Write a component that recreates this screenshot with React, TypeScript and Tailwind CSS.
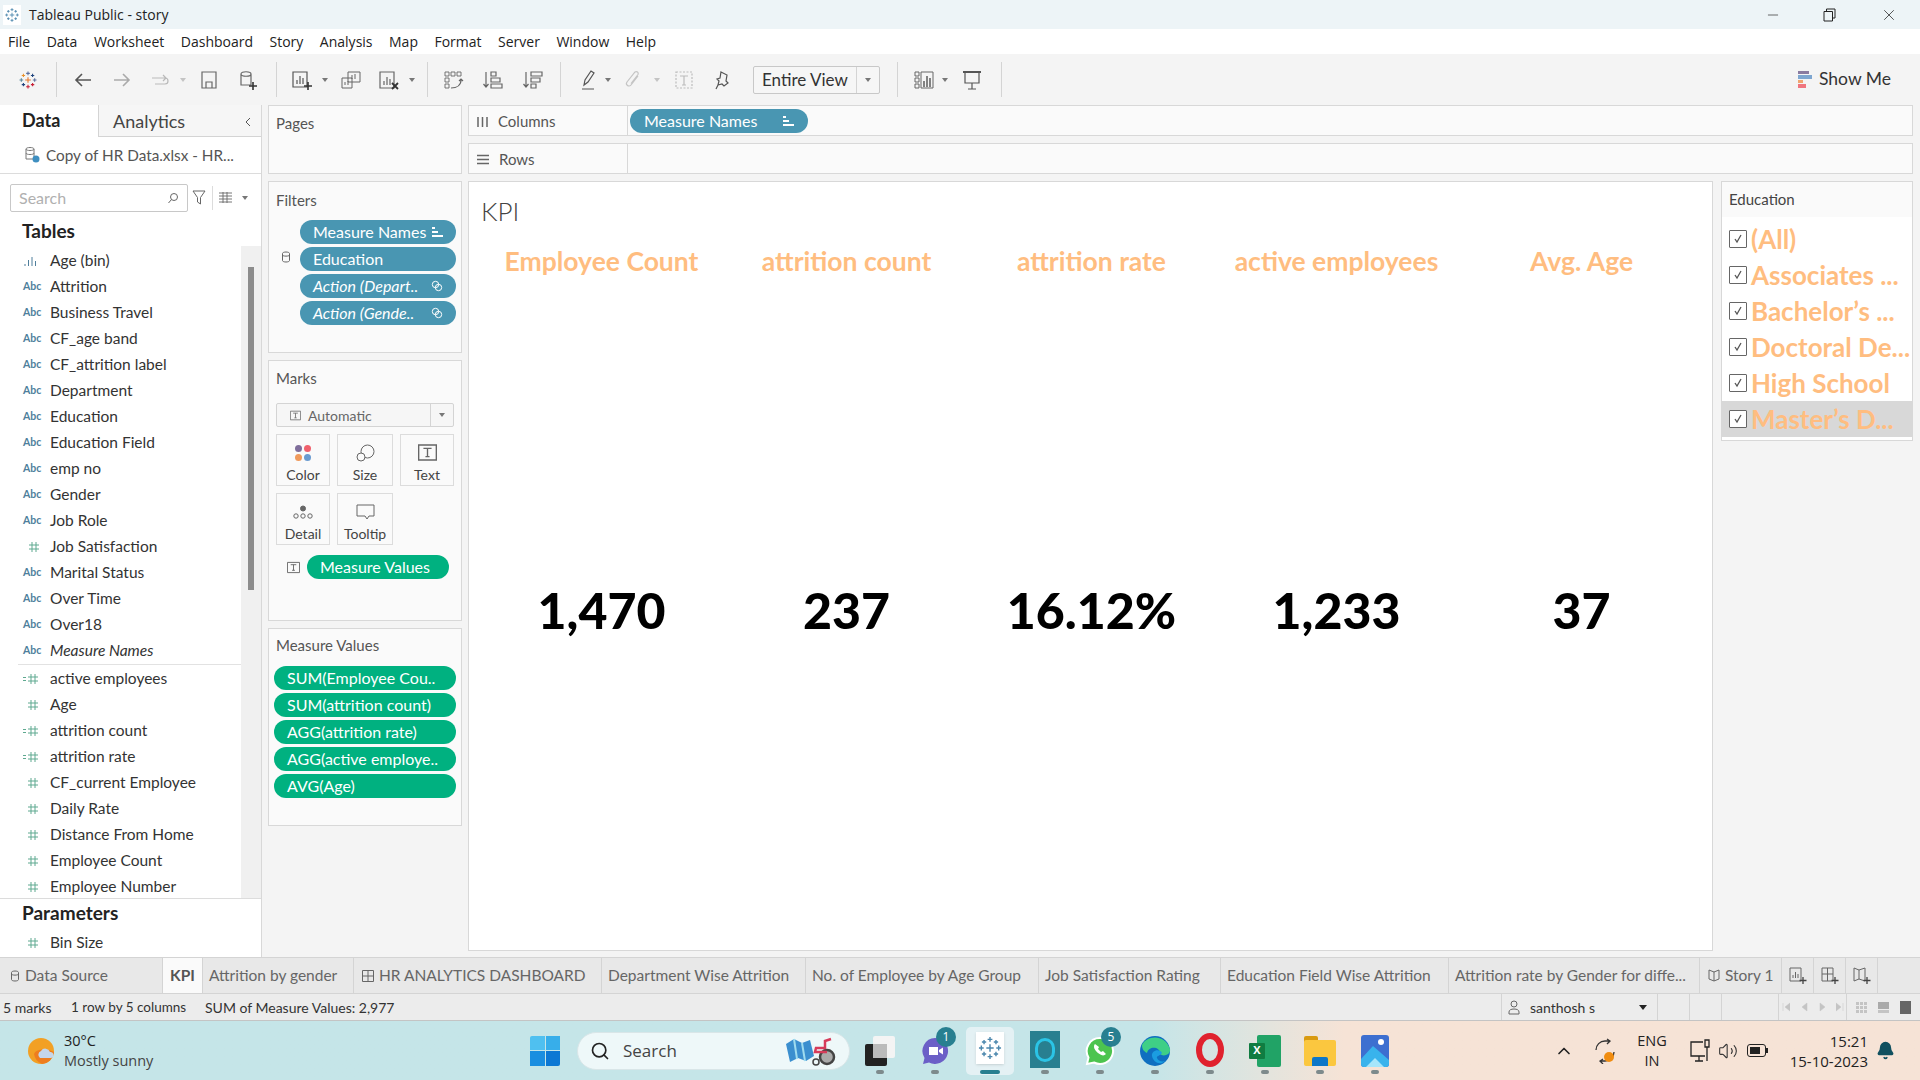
import type { ReactNode } from "react";
import { Search, ChevronUp, Bell, Volume2, X, Minus } from "lucide-react";

const dims = ["Attrition", "Business Travel", "CF_age band", "CF_attrition label", "Department", "Education", "Education Field", "emp no", "Gender", "Job Role"];
const dims2 = ["Marital Status", "Over Time", "Over18"];
const measures: [string, boolean][] = [
  ["active employees", true],
  ["Age", false],
  ["attrition count", true],
  ["attrition rate", true],
  ["CF_current Employee", false],
  ["Daily Rate", false],
  ["Distance From Home", false],
  ["Employee Count", false],
  ["Employee Number", false],
];
const kpis = [
  ["Employee Count", "1,470"],
  ["attrition count", "237"],
  ["attrition rate", "16.12%"],
  ["active employees", "1,233"],
  ["Avg. Age", "37"],
];
const education = ["(All)", "Associates ...", "Bachelor’s ...", "Doctoral De...", "High School", "Master’s D..."];
const menus = ["File", "Data", "Worksheet", "Dashboard", "Story", "Analysis", "Map", "Format", "Server", "Window", "Help"];
const tabs: [string, number][] = [
  ["Attrition by gender", 151],
  ["HR ANALYTICS DASHBOARD", 248],
  ["Department Wise Attrition", 204],
  ["No. of Employee by Age Group", 233],
  ["Job Satisfaction Rating", 182],
  ["Education Field Wise Attrition", 228],
  ["Attrition rate by Gender for diffe...", 251],
];

function Ico({ w = 22, h = 22, vb = "0 0 22 22", children }: { w?: number; h?: number; vb?: string; children: ReactNode }) {
  return (
    <svg width={w} height={h} viewBox={vb} fill="none" stroke="currentColor" strokeWidth="1.2">
      {children}
    </svg>
  );
}

function Caret({ light }: { light?: boolean }) {
  return <div className={`w-0 h-0 border-x-[3.5px] border-x-transparent border-t-[4px] ${light ? "border-t-[#c4c4c4]" : "border-t-[#777]"}`} />;
}

function Box({ ml, w = 26, children }: { ml: string; w?: number; children: ReactNode }) {
  return (
    <div className={`${ml} flex justify-center items-center text-[#666]`} style={{ width: w }}>
      {children}
    </div>
  );
}

function Sep({ ml }: { ml: string }) {
  return <div className={`${ml} w-px h-[35px] bg-[#d4d4d4]`} />;
}

function Crosses({ colored }: { colored?: boolean }) {
  const c = (k: string) => (colored ? k : "#4b87ad");
  const items: [number, number, number, string][] = [
    [12, 12, 3.4, c("#e8762b")],
    [12, 4, 2.2, c("#5b6f9e")],
    [12, 20, 2.2, c("#c72037")],
    [4, 12, 2.2, c("#59879b")],
    [20, 12, 2.2, c("#5b6f9e")],
    [6.5, 6.5, 2, c("#eb9129")],
    [17.5, 6.5, 2, c("#1f447e")],
    [6.5, 17.5, 2, c("#1f447e")],
    [17.5, 17.5, 2, c("#c72037")],
  ];
  return (
    <>
      {items.map(([x, y, r, col], i) => (
        <path key={i} d={`M${x - r} ${y}H${x + r}M${x} ${y - r}V${y + r}`} stroke={col} strokeWidth="1.3" />
      ))}
    </>
  );
}

function Toolbar() {
  return (
    <div className="h-[51px] bg-[#f4f4f4] flex items-center shrink-0">
      <div className="w-[56px] flex justify-center">
        <Ico w={20} h={20} vb="0 0 24 24"><Crosses colored /></Ico>
      </div>
      <Sep ml="" />
      <Box ml="ml-[13px]"><Ico><path d="M19 11H4M10 5l-6 6 6 6" stroke="#555" strokeWidth="1.6" /></Ico></Box>
      <Box ml="ml-[13px]"><Ico><path d="M3 11h15M12 5l6 6-6 6" stroke="#aaa" strokeWidth="1.6" /></Ico></Box>
      <Box ml="ml-[13px]" w={24}><Ico><path d="M6 15h10a3 3 0 0 0 0-6H3M14 6l3 3-3 3" stroke="#b9b9b9" /></Ico></Box>
      <Box ml="ml-[6px]" w={10}><Caret light /></Box>
      <Box ml="ml-[8px]"><Ico><path d="M4 3h14v16H4zM8 19v-6h6v6" stroke="#666" /></Ico></Box>
      <Box ml="ml-[13px]"><Ico><path d="M4 5c0-3 10-3 10 0v11H4zM4 5c0 3 10 3 10 0" stroke="#666" /><path d="M16 13v8M12 17h8" stroke="#333" strokeWidth="1.6" /></Ico></Box>
      <Sep ml="ml-[15px]" />
      <Box ml="ml-[11px]"><Ico><path d="M3 3h14v15H3zM7 15v-4M10 15V7M13 15v-6" stroke="#555" /><path d="M18 13v8M14 17h8" stroke="#333" strokeWidth="1.6" /></Ico></Box>
      <Box ml="ml-[6px]" w={10}><Caret /></Box>
      <Box ml="ml-[8px]"><Ico><path d="M8 3h12v10H8zM2 9h10v10H2zM12 10V6M15 10V5M5 16v-3M8 16v-4" stroke="#666" strokeWidth="1" /></Ico></Box>
      <Box ml="ml-[11px]"><Ico><path d="M3 3h14v16H3zM7 16v-4M10 16V8M13 16v-6" stroke="#666" /><path d="M15 14l6 6M21 14l-6 6" stroke="#333" strokeWidth="1.8" /></Ico></Box>
      <Box ml="ml-[6px]" w={10}><Caret /></Box>
      <Sep ml="ml-[10px]" />
      <Box ml="ml-[12px]"><Ico><path d="M3 3h4v4H3zM9 3h4v4H9zM15 3h4v4h-4zM3 9h4v4H3zM3 15h4v4H3z" strokeWidth="0.9" /><path d="M9 19c6 0 10-3 10-8M17 12l2-2 2 2" /></Ico></Box>
      <Box ml="ml-[14px]"><Ico><path d="M4 3v15M1.500 15L4 18l2.500-3M9 3h5v4H9zM9 9h9v4H9zM9 15h11v4H9z" /></Ico></Box>
      <Box ml="ml-[14px]"><Ico><path d="M4 3v15M1.500 15L4 18l2.500-3M9 3h11v4H9zM9 9h9v4H9zM9 15h5v4H9z" /></Ico></Box>
      <Sep ml="ml-[14px]" />
      <Box ml="ml-[13px]"><Ico><path d="M8 16l1-5 6-9 3 2-6 9zM6 20h12" stroke="#555" /></Ico></Box>
      <Box ml="ml-[3px]" w={10}><Caret /></Box>
      <Box ml="ml-[7px]"><Ico><path d="M16 7l-7 9a2.500 2.500 0 0 1-4-3l8-10a2 2 0 0 1 3 2.500l-7 9" stroke="#c4c4c4" /></Ico></Box>
      <Box ml="ml-[6px]" w={10}><Caret light /></Box>
      <Box ml="ml-[9px]"><Ico><path d="M3 3h16v16H3z" stroke="#bbb" strokeDasharray="2 1.500" /><path d="M7 7h8M11 7v9M9 16h4" stroke="#bbb" /></Ico></Box>
      <Box ml="ml-[12px]"><Ico><path d="M10 3l6 3-1 6 2 2-4 3-2-2-4 1 1-4-2-2 3-1zM7 16l-2 4" stroke="#555" /></Ico></Box>
      <div className="ml-[18px] w-[127px] h-[28px] flex border border-[#c8c8c8] rounded-[2px] bg-[#f6f6f6]">
        <div className="w-[103px] border-r border-[#d4d4d4] pl-[8px] text-[17px] leading-[26px] text-[#333]">Entire View</div>
        <div className="flex-1 flex items-center justify-center"><Caret /></div>
      </div>
      <Sep ml="ml-[17px]" />
      <Box ml="ml-[13px]"><Ico><path d="M2 3h4v4H2zM2 9h4v4H2zM2 15h4v4H2zM8 3h12v16H8z" stroke="#666" strokeWidth="1" /><path d="M11 18v-6M14 18V7M17 18v-9" stroke="#666" strokeWidth="1.6" /></Ico></Box>
      <Box ml="ml-[3px]" w={10}><Caret /></Box>
      <Box ml="ml-[9px]"><Ico><path d="M2 3h18" stroke="#555" strokeWidth="2" /><path d="M4 3v11h14V3M11 14v6M7 20h8" stroke="#555" /></Ico></Box>
      <Sep ml="ml-[16px]" />
      <div className="ml-auto mr-[29px] flex items-center gap-[7px] text-[17.5px] text-[#333]">
        <div className="flex flex-col w-[14px] h-[18px] gap-[1px]">
          <div className="h-[3.5px] w-[11px] bg-[#8a7ba0]" />
          <div className="h-[3.5px] w-[14px] bg-[#7ea6d0]" />
          <div className="h-[3.5px] w-[5px] bg-[#f0a56f]" />
          <div className="h-[3.5px] w-[8px] bg-[#f0767f]" />
        </div>
        Show Me
      </div>
    </div>
  );
}

function Hash({ calc }: { calc?: boolean }) {
  return (
    <svg width="18" height="12" viewBox="0 0 18 12" fill="none" stroke="#5fa990" strokeWidth="1">
      {calc && <path d="M0 4.500h3M0 7.500h3" />}
      <path d="M5 4h10M5 8h10M8 1v10M12 1v10" />
    </svg>
  );
}

function Field({ icon, label, italic }: { icon: ReactNode; label: string; italic?: boolean }) {
  return (
    <div className="h-[26px] flex items-center">
      <div className="w-[50px] pl-[23px] flex items-center shrink-0">{icon}</div>
      <span className={`text-[15.5px] text-[#333] ${italic ? "italic" : ""}`}>{label}</span>
    </div>
  );
}

function Abc() {
  return <span className="text-[10.5px] font-bold text-[#4f7f9c]">Abc</span>;
}

function DataPane() {
  return (
    <div className="w-[262px] shrink-0 bg-white border-r border-[#d8d8d8] flex flex-col">
      <div className="h-[32px] flex shrink-0">
        <div className="w-[98px] pl-[22px] text-[18px] font-bold leading-[31px] text-[#222]">Data</div>
        <div className="flex-1 bg-[#f6f6f6] border-l border-b border-[#d4d4d4] pt-[2px] pl-[14px] pr-[9px] flex items-center justify-between text-[18px] text-[#444]">
          Analytics
          <svg width="8" height="12" viewBox="0 0 8 12" fill="none" stroke="#555"><path d="M6 2L2 6l4 4" /></svg>
        </div>
      </div>
      <div className="h-[37px] border-b border-[#dcdcdc] flex items-center pl-[24px] gap-[6px] text-[15.3px] text-[#555] shrink-0">
        <svg width="16" height="18" viewBox="0 0 16 18" fill="none" stroke="#777"><path d="M2 3c0-2 8-2 8 0v10H2zM2 3c0 2 8 2 8 0M2 7c0 2 8 2 8 0" /><circle cx="12" cy="13" r="3.500" fill="#3f8fc0" stroke="none" /></svg>
        Copy of HR Data.xlsx - HR...
      </div>
      <div className="h-[42px] pt-[5px] flex items-center pl-[10px] shrink-0">
        <div className="w-[178px] h-[28px] border border-[#c8c8c8] rounded-[2px] flex items-center justify-between pl-[8px] pr-[8px] text-[16px] text-[#b0b0b0]">
          Search
          <svg width="12" height="12" viewBox="0 0 12 12" fill="none" stroke="#666"><circle cx="7" cy="5" r="3.500" /><path d="M4.500 7.500L1.500 11" /></svg>
        </div>
        <svg className="ml-[4px]" width="14" height="15" viewBox="0 0 14 15" fill="none" stroke="#666"><path d="M1 1h12L8.500 7.500V14L5.500 12V7.500z" /></svg>
        <div className="ml-[6px] h-[24px] w-px bg-[#dcdcdc]" />
        <svg className="ml-[6px]" width="13" height="11" viewBox="0 0 13 11" fill="none" stroke="#666" strokeWidth="0.9"><path d="M0 1h13M0 4h13M0 7h13M0 10h13M4 0v11M8 0v11" /></svg>
        <div className="ml-[10px]"><Caret /></div>
      </div>
      <div className="h-[30px] pl-[22px] text-[19px] font-bold leading-[30px] text-[#222] shrink-0">Tables</div>
      <div className="h-[652px] shrink-0 flex">
        <div className="w-[241px] mt-[2px]">
          <Field label="Age (bin)" icon={<svg width="16" height="12" viewBox="0 0 16 12" fill="none" stroke="#4f7f9c"><path d="M2 11V9M5.500 11V5M9 11V2M12.500 11V6" /></svg>} />
          {dims.map((d) => <Field key={d} label={d} icon={<Abc />} />)}
          <Field label="Job Satisfaction" icon={<div className="pl-[1px]"><Hash /></div>} />
          {dims2.map((d) => <Field key={d} label={d} icon={<Abc />} />)}
          <div className="ml-[18px] mb-[1px] border-b border-[#e2e2e2]">
            <div className="-ml-[18px]"><Field label="Measure Names" italic icon={<Abc />} /></div>
          </div>
          {measures.map(([m, calc]) => <Field key={m} label={m} icon={<Hash calc={calc} />} />)}
        </div>
        <div className="w-[20px] bg-[#f0f0f0] flex justify-center">
          <div className="w-[6px] h-[323px] mt-[21px] bg-[#8c8c8c]" />
        </div>
      </div>
      <div className="border-t border-[#dcdcdc] flex-1">
        <div className="h-[31px] pl-[22px] text-[19px] font-bold leading-[28px] text-[#222]">Parameters</div>
        <Field label="Bin Size" icon={<Hash />} />
      </div>
    </div>
  );
}

function Pill({ green, italic, className, children }: { green?: boolean; italic?: boolean; className?: string; children: ReactNode }) {
  return (
    <div className={`rounded-full h-[24px] flex items-center justify-between text-[16px] text-white ${green ? "bg-[#00b180]" : "bg-[#4996b2]"} ${italic ? "italic" : ""} ${className ?? ""}`}>
      {children}
    </div>
  );
}

function SortMark() {
  return (
    <svg width="11" height="10" viewBox="0 0 11 10" stroke="#fff" strokeWidth="1.800"><path d="M0 1h3M0 5h6M0 9h11" /></svg>
  );
}

function LinkMark() {
  return (
    <svg width="12" height="12" viewBox="0 0 12 12" fill="none" stroke="#fff"><circle cx="4.500" cy="4.500" r="3.200" /><circle cx="7.500" cy="7.500" r="3.200" /></svg>
  );
}

function TIcon({ size = 13 }: { size?: number }) {
  return (
    <svg width={size} height={size} viewBox="0 0 14 12" fill="none" stroke="#666"><path d="M.5.500h13v11H.500z" /><path d="M4 3h6M7 3v6M5.500 9h3" /></svg>
  );
}

function MarkCard({ label, wide, children }: { label: string; wide?: boolean; children: ReactNode }) {
  return (
    <div className={`${wide ? "w-[56px]" : "w-[54px]"} h-[52px] border border-[#dcdcdc] flex flex-col items-center text-[14px] text-[#444]`}>
      <div className="h-[29px] flex items-end justify-center">{children}</div>
      <div className="mt-[2px]">{label}</div>
    </div>
  );
}

function Shelves() {
  return (
    <div className="w-[194px] shrink-0 ml-[6px] flex flex-col gap-[7px] text-[15px] text-[#555]">
      <div className="h-[69px] bg-[#fafafa] border border-[#d8d8d8] pl-[7px] pt-[6px]">Pages</div>
      <div className="h-[172px] bg-[#fafafa] border border-[#d8d8d8] pl-[7px] pt-[7px]">
        <div className="leading-[22px]">Filters</div>
        <div className="mt-[9px] flex flex-col gap-[3px] relative">
          <Pill className="ml-[24px] w-[156px] pl-[13px] pr-[13px]">Measure Names <SortMark /></Pill>
          <Pill className="ml-[24px] w-[156px] pl-[13px]">Education</Pill>
          <Pill italic className="ml-[24px] w-[156px] pl-[13px] pr-[13px]">Action (Depart.. <LinkMark /></Pill>
          <Pill italic className="ml-[24px] w-[156px] pl-[13px] pr-[13px]">Action (Gende.. <LinkMark /></Pill>
          <svg className="absolute left-[6px] top-[31px]" width="8" height="12" viewBox="0 0 8 12" fill="none" stroke="#666"><path d="M.5 2.500c0-2 7-2 7 0v7c0 2-7 2-7 0zM.5 4c0 1.500 7 1.500 7 0" /></svg>
        </div>
      </div>
      <div className="h-[261px] bg-[#fafafa] border border-[#d8d8d8] pl-[7px] pt-[6px]">
        <div className="leading-[22px]">Marks</div>
        <div className="mt-[14px] w-[178px] h-[24px] border border-[#d4d4d4] rounded-[2px] flex bg-[#f6f6f6] text-[14px] text-[#666]">
          <div className="flex-1 flex items-center gap-[7px] pl-[13px] border-r border-[#d4d4d4]"><TIcon size={11} /> Automatic</div>
          <div className="w-[22px] flex items-center justify-center"><Caret /></div>
        </div>
        <div className="mt-[7px] flex gap-[7px]">
          <MarkCard label="Color">
            <div className="grid grid-cols-2 gap-[2px] w-[16px] mb-[1px]">
              <div className="h-[7px] rounded-full bg-[#7f6e9b]" /><div className="h-[7px] rounded-full bg-[#f0616d]" />
              <div className="h-[7px] rounded-full bg-[#f09a5c]" /><div className="h-[7px] rounded-full bg-[#6a9bd0]" />
            </div>
          </MarkCard>
          <MarkCard label="Size" wide>
            <svg width="19" height="18" viewBox="0 0 19 18" fill="none" stroke="#666"><circle cx="11.500" cy="7.500" r="6.500" /><circle cx="5" cy="13" r="4" fill="#fafafa" /></svg>
          </MarkCard>
          <MarkCard label="Text"><TIcon size={19} /></MarkCard>
        </div>
        <div className="mt-[7px] flex gap-[7px]">
          <MarkCard label="Detail">
            <svg width="20" height="16" viewBox="0 0 20 16" fill="none" stroke="#666"><circle cx="10" cy="3.500" r="2.500" fill="#666" /><circle cx="3" cy="11" r="2.200" /><circle cx="10" cy="11" r="2.200" /><circle cx="17" cy="11" r="2.200" /></svg>
          </MarkCard>
          <MarkCard label="Tooltip" wide>
            <svg width="19" height="17" viewBox="0 0 19 17" fill="none" stroke="#666"><path d="M1 1h17v11h-5l-2 3-2-3H1z" /></svg>
          </MarkCard>
        </div>
        <div className="mt-[10px] flex items-center">
          <div className="ml-[11px] w-[20px]"><TIcon /></div>
          <Pill green className="w-[142px] pl-[13px]">Measure Values</Pill>
        </div>
      </div>
      <div className="h-[198px] bg-[#fafafa] border border-[#d8d8d8] pl-[5px] pt-[5px]">
        <div className="pl-[2px] leading-[22px]">Measure Values</div>
        <div className="mt-[10px] flex flex-col gap-[3px]">
          {["SUM(Employee Cou..", "SUM(attrition count)", "AGG(attrition rate)", "AGG(active employe..", "AVG(Age)"].map((p) => (
            <Pill key={p} green className="w-[182px] pl-[13px]">{p}</Pill>
          ))}
        </div>
      </div>
    </div>
  );
}

function View() {
  return (
    <div className="flex-1 flex flex-col gap-[7px] ml-[6px] mr-[7px] min-w-0">
      <div className="h-[31px] bg-[#fafafa] border border-[#d8d8d8] flex items-center text-[15px] text-[#555]">
        <div className="w-[159px] h-full flex items-center gap-[10px] pl-[8px] pt-[1px] border-r border-[#d8d8d8]">
          <svg width="11" height="12" viewBox="0 0 11 12" stroke="#666" strokeWidth="1.500"><path d="M1 2v10M5.500 2v10M10 2v10" /></svg>
          Columns
        </div>
        <Pill className="ml-[2px] w-[178px] pl-[14px] pr-[14px]">Measure Names <SortMark /></Pill>
      </div>
      <div className="h-[31px] bg-[#fafafa] border border-[#d8d8d8] flex items-center text-[15px] text-[#555]">
        <div className="w-[159px] h-full flex items-center gap-[10px] pl-[8px] pt-[1px] border-r border-[#d8d8d8]">
          <svg width="12" height="11" viewBox="0 0 12 11" stroke="#666" strokeWidth="1.500"><path d="M0 1.500h12M0 5.500h12M0 9.500h12" /></svg>
          Rows
        </div>
      </div>
      <div className="flex-1 flex gap-[8px] min-h-0">
        <div className="w-[1245px] shrink-0 h-[770px] bg-white border border-[#d8d8d8] pl-[10px]">
          <div className="h-[59px] pt-[10px] pl-[2px] text-[26px] font-light text-[#444]">KPI</div>
          <div className="flex">
            {kpis.map(([h]) => (
              <div key={h} className="w-[245px] text-center text-[26.5px] font-bold text-[#ffbd80] leading-[40px]">{h}</div>
            ))}
          </div>
          <div className="flex mt-[299px]">
            {kpis.map(([h, v]) => (
              <div key={h} className="w-[245px] text-center text-[50px] font-black text-black leading-[60px]">{v}</div>
            ))}
          </div>
        </div>
        <div className="flex-1 min-w-0 h-[260px] bg-white border border-[#d8d8d8] overflow-hidden">
          <div className="h-[35px] bg-[#fafafa] pl-[7px] leading-[35px] text-[15px] text-[#444]">Education</div>
          <div className="pt-[4px]">
            {education.map((e, i) => (
              <div key={e} className={`h-[36px] flex items-center gap-[4px] pl-[7px] overflow-hidden whitespace-nowrap ${i === 5 ? "bg-[#d8d8d8]" : ""}`}>
                <div className="w-[18px] h-[18px] border border-[#666] bg-white rounded-[1px] flex items-center justify-center shrink-0">
                  <svg width="10" height="10" viewBox="0 0 10 10" fill="none" stroke="#555" strokeWidth="1.300"><path d="M2 5l2 3 4-7" /></svg>
                </div>
                <span className="text-[26px] font-bold text-[#ffbd80]">{e}</span>
              </div>
            ))}
          </div>
        </div>
      </div>
    </div>
  );
}

function SheetTabs() {
  return (
    <div className="h-[37px] shrink-0 bg-[#e8e8e8] border-y border-[#d4d4d4] flex text-[15.5px] text-[#666]">
      <div className="w-[162px] flex items-center gap-[6px] pl-[11px]">
        <svg width="8" height="12" viewBox="0 0 8 12" fill="none" stroke="#666"><path d="M.5 2.500c0-2 7-2 7 0v7c0 2-7 2-7 0zM.5 4c0 1.500 7 1.500 7 0" /></svg>
        Data Source
      </div>
      <div className="w-[41px] bg-[#fafafa] border-x border-[#d4d4d4] flex items-center justify-center font-bold text-[#555]">KPI</div>
      {tabs.map(([t, w], i) => (
        <div key={t} className="shrink-0 border-r border-[#d4d4d4] flex items-center pl-[6px] gap-[5px] whitespace-nowrap" style={{ width: w }}>
          {i === 1 && <svg className="ml-[2px]" width="12" height="12" viewBox="0 0 12 12" fill="none" stroke="#666"><path d="M.5.500h11v11H.500zM6 .500v11M.5 6h11" /></svg>}
          {t}
        </div>
      ))}
      <div className="w-[82px] border-r border-[#d4d4d4] flex items-center gap-[5px] pl-[8px]">
        <svg width="12" height="13" viewBox="0 0 12 13" fill="none" stroke="#666"><path d="M1 1l5 2 5-2v9l-5 2-5-2zM6 3v9" /></svg>
        Story 1
      </div>
      {[
        "M1 1h11v13H1zM4 11V8M6.500 11V5M9 11V7",
        "M1 1h11v13H1zM6.500 1v13M1 7h11",
        "M1 1l5 2 6-2v13l-6-2-5 2zM6 3v9",
      ].map((d) => (
        <div key={d} className="w-[32px] border-r border-[#d4d4d4] flex items-center justify-center">
          <svg width="18" height="18" viewBox="0 0 18 18" fill="none" stroke="#666"><path d={d} /><path d="M14 10v7M10.500 13.500h7" stroke="#444" strokeWidth="1.300" /></svg>
        </div>
      ))}
    </div>
  );
}

function StatusBar() {
  return (
    <div className="h-[27px] shrink-0 bg-[#ececec] border-b border-[#c4c4c4] flex items-center text-[14px] text-[#333]">
      <div className="w-[71px] pl-[3px]">5 marks</div>
      <div className="w-[134px] text-[13.5px]">1 row by 5 columns</div>
      <div>SUM of Measure Values: 2,977</div>
      <div className="ml-auto flex h-full">
        <div className="w-[157px] border-x border-[#d4d4d4] flex items-center pl-[6px] gap-[10px]">
          <svg width="12" height="15" viewBox="0 0 12 15" fill="none" stroke="#666"><circle cx="6" cy="4" r="3" /><path d="M1 14v-2c0-2 2-3 5-3s5 1 5 3v2z" /></svg>
          <span className="flex-1">santhosh s</span>
          <div className="mr-[10px] w-0 h-0 border-x-[4px] border-x-transparent border-t-[5px] border-t-[#222]" />
        </div>
        <div className="w-[32px] border-r border-[#d4d4d4]" />
        <div className="w-[32px] border-r border-[#d4d4d4]" />
        <div className="w-[57px] border-r border-[#d4d4d4]" />
        <div className="w-[68px] border-r border-[#d4d4d4] flex items-center justify-center gap-[10px]">
          {["M1 1v8M8 1L3 5l5 4z", "M7 1L2 5l5 4z", "M2 1l5 4-5 4z", "M7 1v8M0 1l5 4-5 4z"].map((d) => (
            <svg key={d} width="8" height="10" viewBox="0 0 8 10" fill="#c4c4c4" stroke="#c4c4c4" strokeWidth="0.500"><path d={d} /></svg>
          ))}
        </div>
        <div className="w-[73px] flex items-center justify-center gap-[11px]">
          <div className="w-[11px] h-[11px] grid grid-cols-3 gap-[1px]">
            {Array.from({ length: 9 }).map((_, i) => <div key={i} className="bg-[#c4c4c4]" />)}
          </div>
          <div className="w-[11px] h-[11px] flex flex-col gap-[1px]"><div className="h-[7px] bg-[#aaa]" /><div className="h-[3px] bg-[#c4c4c4]" /></div>
          <div className="w-[11px] h-[13px] bg-[#666]" />
        </div>
      </div>
    </div>
  );
}

function TaskApp({ ml, active, badge, children }: { ml?: string; active?: boolean; badge?: string; children: ReactNode }) {
  return (
    <div className={`w-[48px] h-[48px] relative flex items-center justify-center rounded-[5px] ${ml ?? "ml-[7px]"} ${active ? "bg-[#e4f1f4]" : ""}`}>
      {children}
      {badge && <div className="absolute top-[0px] right-[3px] w-[20px] h-[20px] rounded-full bg-[#287f90] text-white text-[12px] flex items-center justify-center">{badge}</div>}
      <div className={`absolute bottom-[1px] left-1/2 -translate-x-1/2 h-[4px] rounded-full ${active ? "w-[20px] bg-[#287f90]" : "w-[8px] bg-[#7d8a8c]"}`} />
    </div>
  );
}

function Taskbar() {
  return (
    <div className="flex-1 min-h-0 bg-gradient-to-r from-[#c5e5e8] from-60% to-[#f6e3d6] to-70% flex items-center font-['Open_Sans',sans-serif] text-[#222]">
      <svg className="ml-[27px]" width="28" height="28" viewBox="0 0 28 28">
        <circle cx="14" cy="14" r="13" fill="#f2a024" />
        <path d="M15 27a13 13 0 0 1-8-10c3-6 14-5 20-2a13 13 0 0 1-12 12z" fill="#ee7d1f" />
        <path d="M13 21a4 4 0 0 1 1-7 5 5 0 0 1 9 1 3 3 0 0 1 1 6z" fill="#c5d6ea" />
      </svg>
      <div className="ml-[9px] w-[125px] text-[14.5px] leading-[20px]">
        <div>30°C</div>
        <div className="text-[#444]">Mostly sunny</div>
      </div>
      <div className="ml-[341px] w-[30px] h-[30px] grid grid-cols-2 gap-[1px]">
        <div className="bg-[#4fc0f0] rounded-tl-[2px]" /><div className="bg-[#37aeea]" /><div className="bg-[#1a8ee0]" /><div className="bg-[#0c78d4] rounded-br-[2px]" />
      </div>
      <div className="ml-[17px] w-[273px] h-[38px] rounded-full bg-[#eef8f9] border border-[#d9e6e8] flex items-center pl-[12px] text-[17px] text-[#444]">
        <Search size={20} color="#222" strokeWidth={2} />
        <span className="ml-[13px]">Search</span>
        <svg className="ml-auto mr-[10px]" width="54" height="30" viewBox="0 0 54 30" fill="none">
          <path d="M1 8l8-5 8 4 8-3 4 16-8 5-8-3-8 4z" fill="#3b8fcf" />
          <path d="M9 3l3 20M17 7l3 18" stroke="#9fdcef" strokeWidth="2" />
          <circle cx="42" cy="21" r="7" stroke="#444" strokeWidth="2.500" fill="#aaa" />
          <circle cx="31" cy="26" r="3" stroke="#444" strokeWidth="1.500" />
          <path d="M46 3l-6 2v7H31l-1 4h12" stroke="#d63b5a" strokeWidth="2.500" />
        </svg>
      </div>
      <TaskApp ml="ml-[6px]">
        <div className="relative w-[30px] h-[30px]">
          <div className="absolute left-[8px] top-0 w-[22px] h-[22px] bg-[#f4f4f4] rounded-[2px]" />
          <div className="absolute left-0 top-[8px] w-[22px] h-[22px] bg-[#222] rounded-[2px]" />
          <div className="absolute left-[8px] top-[8px] w-[14px] h-[14px] bg-[#bbb]" />
        </div>
      </TaskApp>
      <TaskApp badge="1">
        <svg width="30" height="32" viewBox="0 0 30 32"><path d="M15 3a13 13 0 1 1-6 24.500L3 29l1.500-6A13 13 0 0 1 15 3z" fill="#6b5fc7" /><path d="M9 12h9v8H9zM19 15l4-2.500v7L19 17z" fill="#fff" /></svg>
      </TaskApp>
      <TaskApp active>
        <div className="w-[28px] h-[32px] bg-white shadow flex items-center justify-center -mt-[6px]">
          <Ico w={26} h={26} vb="0 0 24 24"><Crosses /></Ico>
        </div>
      </TaskApp>
      <TaskApp>
        <div className="w-[30px] h-[37px] bg-[#287f90] flex items-center justify-center -mt-[2px]">
          <div className="w-[20px] h-[24px] rounded-full border-[3px] border-[#2bc4e6]" />
        </div>
      </TaskApp>
      <TaskApp badge="5">
        <svg width="32" height="32" viewBox="0 0 32 32"><path d="M16 3a13 13 0 1 1-6 24.500L3 29l1.500-6.500A13 13 0 0 1 16 3z" fill="#4cc44f" stroke="#fff" strokeWidth="2" /><path d="M11 9c-2 2-1 6 3 9s6 3 8 1l-3-3-2 1-3-3 1-2z" fill="#fff" /></svg>
      </TaskApp>
      <TaskApp>
        <svg width="32" height="32" viewBox="0 0 32 32"><circle cx="16" cy="16" r="15" fill="#0f6fc0" /><path d="M3 10C8 0 26-1 31 14c1 6-7 8-10 5 1-7-11-9-13-1C4 16 3 13 3 10z" fill="#3fcf86" /><path d="M13 21c-1-6 8-8 10-3-2 3-6 3-5 5 1 3 5 4 8 3-5 5-12 1-13-5z" fill="#1b9de0" /></svg>
      </TaskApp>
      <TaskApp>
        <div className="w-[28px] h-[34px] rounded-[50%] border-[6px] border-[#e0222e] -mt-[2px]" />
      </TaskApp>
      <TaskApp>
        <div className="relative w-[32px] h-[32px]">
          <div className="absolute right-0 top-0 w-[24px] h-[32px] bg-[#21a366] rounded-[2px]" />
          <div className="absolute left-0 top-[8px] w-[16px] h-[16px] bg-[#107c41] rounded-[1px] text-white text-[11px] font-bold flex items-center justify-center">X</div>
        </div>
      </TaskApp>
      <TaskApp>
        <div className="relative w-[32px] h-[30px]">
          <div className="absolute left-0 top-0 w-[14px] h-[8px] bg-[#d99a10] rounded-t-[2px]" />
          <div className="absolute left-0 top-[4px] w-[32px] h-[26px] bg-[#fbc73f] rounded-[2px]" />
          <div className="absolute left-[8px] bottom-0 w-[16px] h-[9px] bg-[#0d77c8] rounded-t-[2px]" />
        </div>
      </TaskApp>
      <TaskApp>
        <svg width="28" height="32" viewBox="0 0 28 32"><rect width="28" height="32" rx="3" fill="#3d6fd0" /><path d="M0 24l12-13 16 14v4a3 3 0 0 1-3 3H3a3 3 0 0 1-3-3z" fill="#39b3ec" /><path d="M5 32l9-9 9 9z" fill="#a6e6fb" /><circle cx="20" cy="7" r="3" fill="#fff" /></svg>
      </TaskApp>
      <ChevronUp className="ml-[155px]" size={20} color="#222" />
      <svg className="ml-[20px]" width="22" height="26" viewBox="0 0 22 26" fill="none" stroke="#333" strokeWidth="1.300">
        <path d="M2 12c0-5 4-9 9-9h4M13 1l3 2-3 3M20 14c0 5-4 9-9 9H7M9 21l-3 2 3 3" />
        <circle cx="15" cy="19" r="5" fill="#f08c10" stroke="none" />
      </svg>
      <div className="ml-[18px] w-[36px] text-center text-[14.5px] leading-[20px]">
        <div>ENG</div>
        <div>IN</div>
      </div>
      <svg className="ml-[20px]" width="20" height="24" viewBox="0 0 20 24" fill="none" stroke="#222" strokeWidth="1.300">
        <path d="M13 3H1v14h14M5 22h8M9 17v5" /><path d="M15 1h4v7h-4zM17 8v14" />
      </svg>
      <Volume2 className="ml-[8px]" size={20} color="#333" strokeWidth={1.300} />
      <div className="ml-[9px] w-[19px] h-[13px] border border-[#222] rounded-[3px] p-[2px] relative">
        <div className="w-[10px] h-full bg-[#222]" />
        <div className="absolute -right-[3px] top-[3px] w-[2px] h-[5px] bg-[#222]" />
      </div>
      <div className="ml-[10px] w-[92px] text-right text-[15px] leading-[20px]">
        <div>15:21</div>
        <div>15-10-2023</div>
      </div>
      <Bell className="ml-[8px]" size={19} color="#10505f" fill="#10505f" />
    </div>
  );
}

export default function App() {
  return (
    <div className="w-[1920px] h-[1080px] flex flex-col overflow-hidden bg-[#f4f4f4] font-['Lato',sans-serif]">
      <div className="h-[29px] shrink-0 bg-[#edf4f7] flex items-center pl-[3px] font-['Open_Sans',sans-serif] text-[14px] text-[#222]">
        <div className="w-[18px] h-[20px] bg-white mr-[8px] flex items-center justify-center">
          <Ico w={16} h={16} vb="0 0 24 24"><Crosses /></Ico>
        </div>
        Tableau Public - story
        <div className="ml-auto flex items-center">
          <Minus size={16} strokeWidth={1} className="mr-[42px]" />
          <svg className="mr-[44px]" width="13" height="14" viewBox="0 0 13 14" fill="none" stroke="#222"><path d="M1 3.500h8.500v9.500H1zM3.500 3.500V1H12v9h-2.500" /></svg>
          <X size={18} strokeWidth={1} className="mr-[22px]" />
        </div>
      </div>
      <div className="h-[25px] shrink-0 bg-white flex items-center pl-[8px] gap-[16.5px] font-['Open_Sans',sans-serif] text-[14px] text-[#222]">
        {menus.map((m) => <span key={m}>{m}</span>)}
      </div>
      <Toolbar />
      <div className="h-[852px] shrink-0 flex">
        <DataPane />
        <Shelves />
        <View />
      </div>
      <SheetTabs />
      <StatusBar />
      <Taskbar />
    </div>
  );
}
